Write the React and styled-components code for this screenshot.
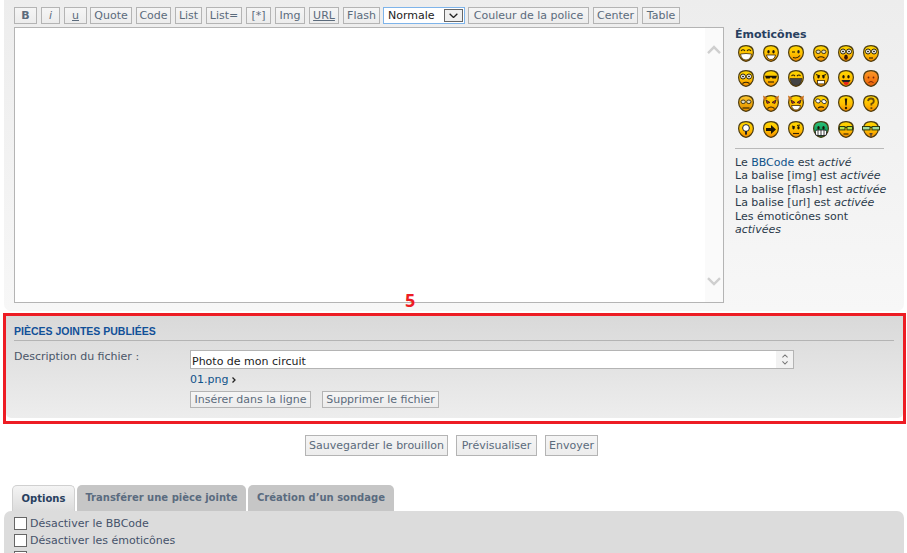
import React from 'react';
import styled, { createGlobalStyle } from 'styled-components';

const GlobalStyle = createGlobalStyle`
  html, body {
    margin: 0;
    height: 553px;
    overflow: hidden;
    background: #fff;
  }
  body {
    font-family: "DejaVu Sans", Verdana, sans-serif;
    font-size: 11px;
    color: #333;
  }
`;

const Page = styled.div`
  width: 907px;
  height: 553px;
  overflow: hidden;
  position: relative;
`;

const EditorPanel = styled.div`
  margin: 0 3px 0 4px;
  height: 311px;
  box-sizing: border-box;
  padding: 7px 10px 0;
  background: linear-gradient(#ededed, #f7f7f7);
  border-radius: 0 0 7px 7px;
  display: grid;
  grid-template-columns: 710px 1fr;
  column-gap: 11px;
`;

const Editor = styled.div`
  min-width: 0;
`;

const Toolbar = styled.div`
  display: flex;
  height: 17px;
  margin-bottom: 3px;
`;

const ToolButton = styled.button`
  box-sizing: border-box;
  flex: none;
  width: ${p => p.$w}px;
  height: ${p => p.$h || 17}px;
  margin: 0 0 0 ${p => p.$gap ?? 4}px;
  padding: 0;
  border: 1px solid #b4b4b4;
  background: linear-gradient(#f5f5f5, #ececec);
  color: #5b6b7c;
  font: ${p => (p.$bold ? 'bold' : 'normal')} 11px "DejaVu Sans", Verdana, sans-serif;
  font-style: ${p => (p.$italic ? 'italic' : 'normal')};
  text-decoration: ${p => (p.$under ? 'underline' : 'none')};
  white-space: nowrap;
  text-align: center;
`;

const SizeSelect = styled.div`
  box-sizing: border-box;
  flex: none;
  width: 82px;
  height: 17px;
  margin-left: 3px;
  padding-left: 4px;
  display: flex;
  align-items: center;
  justify-content: space-between;
  border: 1px solid #7eb4ea;
  background: #fff;
  color: #222;
`;

const SelectArrow = styled.span`
  box-sizing: border-box;
  width: 19px;
  height: 13px;
  margin-right: 1px;
  display: flex;
  align-items: center;
  justify-content: center;
  border: 1px solid #666;
  background: #efefef;
`;

const TextBox = styled.div`
  box-sizing: border-box;
  height: 276px;
  border: 1px solid #b4b4b4;
  background: #fff;
  display: flex;
  justify-content: flex-end;
`;

const ScrollTrack = styled.div`
  width: 18px;
  background: #fafafa;
  display: flex;
  flex-direction: column;
  align-items: center;
  justify-content: space-between;
  padding: 17px 0 16px;
`;

const Sidebar = styled.aside`
  padding-top: 19px;
`;

const SideTitle = styled.h3`
  margin: 0;
  height: 17px;
  padding-top: 2px;
  box-sizing: content-box;
  font: bold 11px "DejaVu Sans", Verdana, sans-serif;
  color: #28405f;
`;

const SmileyGrid = styled.div`
  display: grid;
  grid-template-columns: repeat(6, 25px);
  grid-template-rows: 25px 25px 26px 17px;
  padding-left: 3px;
`;

const SmileySvg = styled.svg`
  overflow: visible;
`;

const SideRule = styled.hr`
  margin: 10px 10px 7px 0;
  border: 0;
  border-top: 1px solid #b9b9b9;
`;

const SideText = styled.div`
  line-height: 13.4px;
  color: #2b3a4a;
`;

const BlueLink = styled.span`
  color: #105289;
`;

const AttachmentBox = styled.section`
  position: relative;
  box-sizing: border-box;
  margin: 2px 1px 0 3px;
  height: 111px;
  border: 3px solid #ed1c24;
  background: #fff;
`;

const Annotation = styled.span`
  position: absolute;
  left: 399px;
  top: -28px;
  font: bold 18px "Open Sans", "DejaVu Sans", sans-serif;
  color: #ed1c24;
`;

const AttachmentInner = styled.div`
  height: 102px;
  box-sizing: border-box;
  padding: 0 9px 0 8px;
  background: linear-gradient(#d9d9d9, #ededed);
  border-radius: 0 0 5px 5px;
`;

const AttachmentTitle = styled.h3`
  margin: 0 0 9px;
  height: 25px;
  box-sizing: border-box;
  padding-top: 9px;
  border-bottom: 1px solid #b4b4b4;
  font: bold 10.5px "Liberation Sans", Arial, sans-serif;
  line-height: 12px;
  color: #115098;
  text-transform: uppercase;
`;

const AttachmentRow = styled.div`
  display: grid;
  grid-template-columns: 176px 604px;
`;

const FieldLabel = styled.label`
  color: #4a5568;
  line-height: 14px;
`;

const FieldColumn = styled.div`
  display: flex;
  flex-direction: column;
`;

const DescriptionInput = styled.div`
  box-sizing: border-box;
  height: 19px;
  padding: 3px 0 0 1px;
  border: 1px solid #b4b4b4;
  background: #fff;
  display: flex;
  align-items: center;
  justify-content: space-between;
  color: #222;
`;

const Spinner = styled.div`
  width: 17px;
  height: 17px;
  margin-top: -3px;
  background: #f2f2f2;
  display: flex;
  flex-direction: column;
  align-items: center;
  justify-content: center;
  gap: 3px;
`;

const FileName = styled.div`
  margin-top: 3px;
  height: 15px;
  line-height: 15px;
  color: #105289;
  display: flex;
  align-items: center;
  gap: 4px;
`;

const AttachmentActions = styled.div`
  display: flex;
  margin-top: 4px;
`;

const SubmitRow = styled.div`
  display: flex;
  justify-content: flex-start;
  padding: 11px 0 0 305px;
`;

const SubmitButton = styled(ToolButton)`
  height: 21px;
  font-size: 11px;
`;

const Tabs = styled.div`
  display: flex;
  margin: 29px 0 0 12px;
  height: 26px;
  gap: 2px;
`;

const Tab = styled.div`
  box-sizing: border-box;
  width: ${p => p.$w}px;
  height: 26px;
  padding-bottom: 1px;
  border-radius: 5px 5px 0 0;
  display: flex;
  align-items: center;
  justify-content: center;
  font: bold 10px "DejaVu Sans", Verdana, sans-serif;
  color: ${p => (p.$active ? '#28405f' : '#5a6b7f')};
  background: ${p => (p.$active ? 'linear-gradient(#f4f4f4, #dcdcdc)' : '#c6c6c6')};
  border: ${p => (p.$active ? '1px solid #d0d0d0' : 'none')};
  border-bottom: none;
`;

const OptionsPanel = styled.div`
  margin: 0 3px 0 4px;
  padding: 4px 10px 0;
  height: 60px;
  background: #dcdcdc;
  border-radius: 7px 7px 0 0;
`;

const OptionRow = styled.div`
  display: flex;
  align-items: center;
  height: 17px;
  gap: 3px;
  color: #45526a;
`;

const CheckBox = styled.span`
  box-sizing: border-box;
  width: 13px;
  height: 13px;
  border: 1px solid #666;
  background: #fff;
`;

const Chevron = ({ up, size = 14, color = '#cfcfcf', width = 2.4 }) => (
  <svg width={size} height={size * 0.65} viewBox="0 0 14 9" fill="none" stroke={color} strokeWidth={width}>
    <path d={up ? 'M1 8 L7 2 L13 8' : 'M1 1 L7 7 L13 1'} />
  </svg>
);

const eyes = <g fill="#1c1405"><ellipse cx="5.5" cy="6.8" rx="1.2" ry="1.8" /><ellipse cx="10.5" cy="6.8" rx="1.2" ry="1.8" /></g>;
const roundEyes = (
  <g fill="#fff" stroke="#2a2208" strokeWidth="1">
    <circle cx="5" cy="6.5" r="2.5" /><circle cx="11" cy="6.5" r="2.5" />
    <circle cx="5" cy="6.5" r=".6" fill="#222" /><circle cx="11" cy="6.5" r=".6" fill="#222" />
  </g>
);
const grayEyes = (
  <g fill="#d9d9c8" stroke="#4a3a14" strokeWidth="1">
    <ellipse cx="5.2" cy="6.8" rx="2.2" ry="1.8" /><ellipse cx="10.8" cy="6.8" rx="2.2" ry="1.8" />
  </g>
);
const line = d => <path d={d} fill="none" stroke="#2f2204" strokeWidth="1.1" />;
const horns = <path d="M0 .5 L4.5 3 L1 6 Z M16 .5 L11.5 3 L15 6 Z" fill="#c9701a" />;
const redEyes = (
  <g stroke="#222" strokeWidth=".8" fill="#d8261c">
    <path d="M3 5 L7 7.5 L4 8.4 Z" /><path d="M13 5 L9 7.5 L12 8.4 Z" />
  </g>
);
const glasses = (fill, out = 0) => (
  <g stroke="#2c3a10" strokeWidth="1" fill={fill}>
    <rect x={1.5 - out} y="5.5" width={5.5 + out} height="3.4" />
    <rect x="9" y="5.5" width={5.5 + out} height="3.4" />
    <path d="M7 6.5 H9" fill="none" />
  </g>
);

const FACES = [
  { parts: <>{line('M3 6 Q5 3.5 7 6 M9 6 Q11 3.5 13 6')}<path d="M2.5 9 Q8 8 13.5 9 Q12.5 15 8 15 Q3.5 15 2.5 9Z" fill="#fff" stroke="#3a2a05" strokeWidth=".8" /></> },
  { parts: <>{eyes}<path d="M3.5 10 H12.5 Q11.5 14.5 8 14.5 Q4.5 14.5 3.5 10Z" fill="#fff" stroke="#3a2a05" strokeWidth=".8" /></> },
  { parts: <>{line('M4 7 H7')}<ellipse cx="10.5" cy="6.8" rx="1.2" ry="1.8" fill="#222" />{line('M5 12.5 Q9 14 12 10.5')}</> },
  { parts: <>{grayEyes}{line('M4.5 13 Q8 10.5 11.5 13')}</> },
  { parts: <>{roundEyes}<ellipse cx="8" cy="12.2" rx="1.8" ry="2.6" fill="#3a1505" /></> },
  { parts: <>{roundEyes}{line('M6 13 H10')}</> },
  { parts: <>{roundEyes}{line('M4.5 13.5 Q8 11 11.5 13.5')}</> },
  { parts: <><path d="M2 5.8 H14 L13 8.4 H9.5 L8 7 L6.5 8.4 H3Z" fill="#1c1405" />{line('M5 12 H11')}</> },
  { parts: <>{line('M3.5 6 Q5 4 7 6 M9 6 Q11 4 12.5 6')}<path d="M2 8.5 H14 Q13 15.5 8 15.5 Q3 15.5 2 8.5Z" fill="#444" stroke="#222" strokeWidth=".6" /></> },
  { parts: <>{line('M3 4.5 L7 6 M13 4.5 L9 6')}{eyes}<rect x="4.5" y="10.5" width="7" height="3.4" fill="#fff" stroke="#3a2a05" strokeWidth=".8" /></> },
  { parts: <>{eyes}<path d="M3.5 10 H12.5 Q11.5 13 8 13 Q4.5 13 3.5 10Z" fill="#222" /><path d="M6 12 H10.5 V14 Q8 16 6 14Z" fill="#e8271c" /></> },
  { parts: <><g fill="#7a2505"><circle cx="5.5" cy="7.5" r=".9" /><circle cx="10.5" cy="7.5" r=".9" /></g><path d="M5.5 12.5 Q8 10.5 10.5 12.5" stroke="#7a2505" fill="none" /></>, top: '#fb9a2a', color: '#f57a12', low: '#e85f0c' },
  { parts: <>{grayEyes}{line('M4.5 13 H11.5')}</>, top: '#ffc933', color: '#eda60a', low: '#e08a00' },
  { parts: <>{redEyes}{line('M4.5 13.5 Q8 10.5 11.5 13.5')}{horns}</> },
  { parts: <>{redEyes}<path d="M3.5 10.5 H12.5 Q11.5 15 8 15 Q4.5 15 3.5 10.5Z" fill="#fff" stroke="#3a2a05" strokeWidth=".8" />{horns}</> },
  { parts: <><g fill="#fff" stroke="#222" strokeWidth=".8"><ellipse cx="5" cy="6" rx="2.4" ry="1.9" transform="rotate(25 5 6)" /><ellipse cx="11" cy="6.6" rx="2.4" ry="1.9" transform="rotate(25 11 6.6)" /></g>{line('M5 13 Q8 11 11 12.5')}</> },
  { parts: <><path d="M6.8 3.5 H9.2 L8.7 10.5 H7.3Z" fill="#2a1d05" /><circle cx="8" cy="13" r="1.2" fill="#2a1d05" /></> },
  { parts: <path d="M5 6 Q5.5 3.5 8 3.5 Q10.8 3.5 10.8 6 Q10.8 8 8.4 8.8 V10.5 M8.4 12.2 V14" fill="none" stroke="#6d4d05" strokeWidth="1.8" /> },
  { parts: <><circle cx="8" cy="7" r="3.4" fill="#fff" stroke="#222" strokeWidth="1" /><rect x="7" y="10" width="2" height="3.6" fill="#222" /></> },
  { parts: <path d="M3 7 H8 V4 L13 8.5 L8 13 V10 H3Z" fill="#1d1505" /> },
  { parts: <>{line('M4 5 L7 6 M9 4.5 L12 4')}{eyes}{line('M5 12.5 H11')}</> },
  { parts: <>{eyes}<rect x="2.5" y="9" width="11" height="5.5" rx="1.5" fill="#fff" stroke="#111" strokeWidth=".8" /><path d="M5 9 V14.5 M8 9 V14.5 M11 9 V14.5" stroke="#111" strokeWidth=".8" /></>, top: '#2cc47a', color: '#12a05e', low: '#0b7c48' },
  { parts: <>{glasses('#b6e04a')}{line('M5.5 13 H10.5')}</> },
  { parts: <>{glasses('#9fdca0', 2)}<path d="M6.5 12 H9.5 V13.5 H6.5Z M7.3 13.5 H8.7 V16.5 H7.3Z" fill="#5a4630" /></> },
];

const Smiley = ({ face, index }) => {
  const gid = `sm${index}`;
  return (
    <SmileySvg width="16" height="17" viewBox="0 0 16 17">
      <defs>
        <linearGradient id={gid} x1="0" y1="0" x2="0" y2="1">
          <stop offset="0" stopColor={face.top || '#ffd800'} />
          <stop offset=".55" stopColor={face.color || '#ffbe00'} />
          <stop offset="1" stopColor={face.low || '#f58a00'} />
        </linearGradient>
      </defs>
      <path d="M8 .7 C12.6 .7 15.4 3.4 15.4 7.4 C15.4 12.4 11 16.4 8 16.4 C5 16.4 .6 12.4 .6 7.4 C.6 3.4 3.4 .7 8 .7Z" fill={`url(#${gid})`} stroke="#4a3a10" strokeWidth="1.2" />
      {face.parts}
    </SmileySvg>
  );
};

const TOOLS = [
  { label: 'B', w: 23, gap: 0, bold: true },
  { label: 'i', w: 19, italic: true },
  { label: ' u ', w: 23, under: true },
  { label: 'Quote', w: 42, gap: 3 },
  { label: 'Code', w: 35 },
  { label: 'List', w: 27 },
  { label: 'List=', w: 36 },
  { label: '[*]', w: 25 },
  { label: 'Img', w: 30 },
  { label: 'URL', w: 30, under: true },
  { label: 'Flash', w: 37 },
];

export default function App() {
  return (
    <Page>
      <GlobalStyle />
      <EditorPanel>
        <Editor>
          <Toolbar>
            {TOOLS.map(t => (
              <ToolButton key={t.label} $w={t.w} $gap={t.gap} $bold={t.bold} $italic={t.italic} $under={t.under}>
                {t.label}
              </ToolButton>
            ))}
            <SizeSelect>
              Normale
              <SelectArrow>
                <Chevron size={9} color="#222" width={2} />
              </SelectArrow>
            </SizeSelect>
            <ToolButton $w={121} $gap={3}>Couleur de la police</ToolButton>
            <ToolButton $w={45}>Center</ToolButton>
            <ToolButton $w={38}>Table</ToolButton>
          </Toolbar>
          <TextBox>
            <ScrollTrack>
              <Chevron up />
              <Chevron />
            </ScrollTrack>
          </TextBox>
        </Editor>
        <Sidebar>
          <SideTitle>Émoticônes</SideTitle>
          <SmileyGrid>
            {FACES.map((f, i) => <Smiley key={i} face={f} index={i} />)}
          </SmileyGrid>
          <SideRule />
          <SideText>
            Le <BlueLink>BBCode</BlueLink> est <em>activé</em><br />
            La balise [img] est <em>activée</em><br />
            La balise [flash] est <em>activée</em><br />
            La balise [url] est <em>activée</em><br />
            Les émoticônes sont<br />
            <em>activées</em>
          </SideText>
        </Sidebar>
      </EditorPanel>

      <AttachmentBox>
        <Annotation>5</Annotation>
        <AttachmentInner>
          <AttachmentTitle>Pièces jointes publiées</AttachmentTitle>
          <AttachmentRow>
            <FieldLabel>Description du fichier :</FieldLabel>
            <FieldColumn>
              <DescriptionInput>
                Photo de mon circuit
                <Spinner>
                  <Chevron up size={6} color="#777" width={2.4} />
                  <Chevron size={6} color="#777" width={2.4} />
                </Spinner>
              </DescriptionInput>
              <FileName>
                01.png
                <svg width="4" height="6" viewBox="0 0 4 6" fill="none" stroke="#222" strokeWidth="1.3">
                  <path d="M.5 .5 L3 3 L.5 5.5" />
                </svg>
              </FileName>
              <AttachmentActions>
                <ToolButton $w={121} $gap={0}>Insérer dans la ligne</ToolButton>
                <ToolButton $w={117} $gap={11}>Supprimer le fichier</ToolButton>
              </AttachmentActions>
            </FieldColumn>
          </AttachmentRow>
        </AttachmentInner>
      </AttachmentBox>

      <SubmitRow>
        <SubmitButton $w={143} $gap={0}>Sauvegarder le brouillon</SubmitButton>
        <SubmitButton $w={81} $gap={8}>Prévisualiser</SubmitButton>
        <SubmitButton $w={53} $gap={8}>Envoyer</SubmitButton>
      </SubmitRow>

      <Tabs>
        <Tab $active $w={63}>Options</Tab>
        <Tab $w={169}>Transférer une pièce jointe</Tab>
        <Tab $w={146}>Création d’un sondage</Tab>
      </Tabs>
      <OptionsPanel>
        <OptionRow><CheckBox />Désactiver le BBCode</OptionRow>
        <OptionRow><CheckBox />Désactiver les émoticônes</OptionRow>
        <OptionRow><CheckBox /></OptionRow>
      </OptionsPanel>
    </Page>
  );
}
